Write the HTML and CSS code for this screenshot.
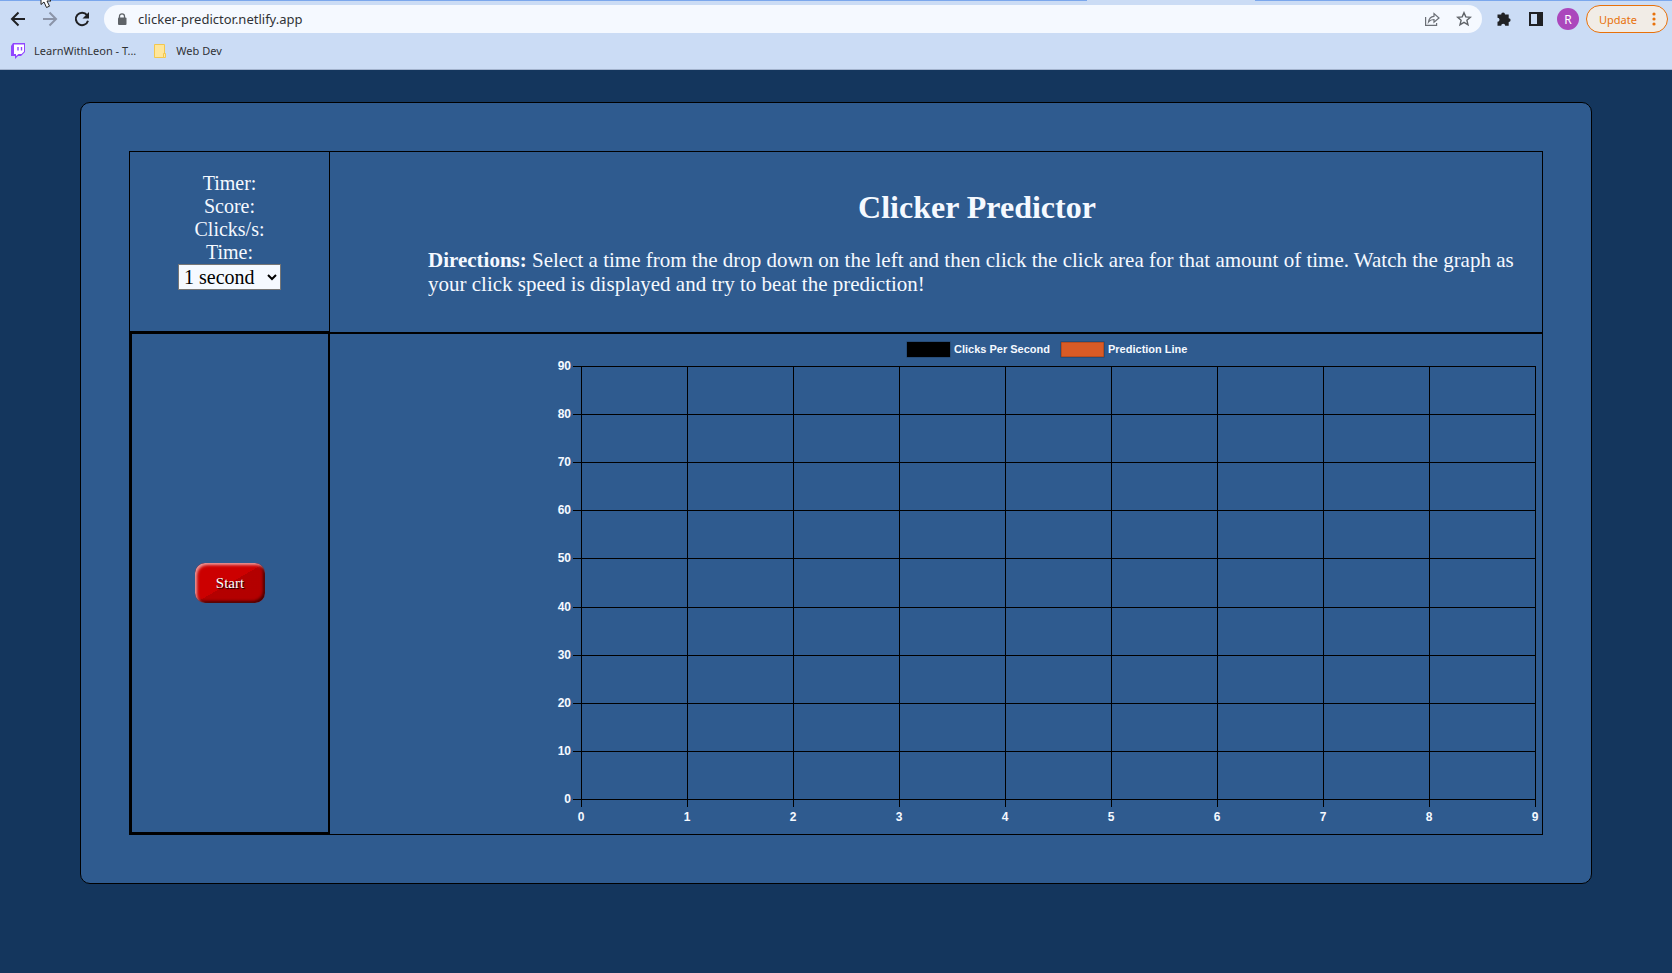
FILE: index.html
```html
<!DOCTYPE html>
<html lang="en">
<head>
<meta charset="utf-8">
<title>Clicker Predictor</title>
<link rel="stylesheet" href="styles.css">
</head>
<body>
<header class="browser">
  <div class="tab-edge"><span class="active-tab"></span></div>
  <div class="toolbar">
    <button class="icon-btn" aria-label="Back"><svg width="16" height="16" viewBox="0 0 16 16" fill="none" stroke="#202124" stroke-width="2"><path d="M15 8H2M8.500 1.500L2 8l6.500 6.500"/></svg></button>
    <button class="icon-btn" aria-label="Forward"><svg width="16" height="16" viewBox="0 0 16 16" fill="none" stroke="#8b94a8" stroke-width="2"><path d="M1 8h13M7.500 1.500L14 8l-6.500 6.500"/></svg></button>
    <button class="icon-btn" aria-label="Reload"><svg width="16" height="16" viewBox="0 0 16 16"><path d="M13 4.200A6.200 6.200 0 1 0 14 9.700" fill="none" stroke="#202124" stroke-width="2"/><path d="M15 1v6.500H8.500z" fill="#202124"/></svg></button>
    <div class="address">
      <svg width="10" height="13" viewBox="0 0 10 13"><path d="M2.500 5V3.300a2.500 2.500 0 0 1 5 0V5" fill="none" stroke="#5f6368" stroke-width="1.300"/><rect x="1" y="4.500" width="8.500" height="7.500" rx="1" fill="#5f6368"/></svg>
      <input class="url" type="text" aria-label="Address" value="clicker-predictor.netlify.app">
      <button class="icon-btn" aria-label="Share"><svg width="16" height="16" viewBox="0 0 16 16" fill="none" stroke="#6b6f76" stroke-width="1.200"><path d="M1.600 6v8.400h11V12"/><path d="M4.500 11C5 7 7 5.500 10 5.300V2.500L15 7l-5 4.300V8.500C7.500 8.500 6 9 4.500 11z"/></svg></button>
      <button class="icon-btn" aria-label="Bookmark"><svg width="16" height="16" viewBox="0 0 16 16" fill="none" stroke="#5f6368" stroke-width="1.400"><path d="M8 1.700l1.800 4.200 4.600.4-3.500 3 1.100 4.500L8 11.400l-4 2.400 1.100-4.500-3.500-3 4.600-.4z"/></svg></button>
    </div>
    <button class="icon-btn" aria-label="Extensions"><svg width="16" height="16" viewBox="0 0 16 16" fill="#202124"><path d="M1.500 3.500h3.700a1.900 1.900 0 0 1 3.800 0h3.700v3.700a1.900 1.900 0 0 1 0 3.800v3.700H9.200a2 2 0 0 0-4 0H1.500v-3.900a2 2 0 0 0 0-4z"/></svg></button>
    <button class="icon-btn" aria-label="Side panel"><svg width="16" height="16" viewBox="0 0 16 16"><path d="M1 1h14v14H1z" fill="#202124"/><path d="M3 3h6v10H3z" fill="#cbdcf5"/></svg></button>
    <button class="avatar" aria-label="Profile">R</button>
    <button class="update">Update <svg width="4" height="14" viewBox="0 0 4 14" fill="#e8710a"><circle cx="2" cy="2" r="1.600"/><circle cx="2" cy="7" r="1.600"/><circle cx="2" cy="12" r="1.600"/></svg></button>
  </div>
  <nav class="bookmarks">
    <a href="#"><svg width="16" height="16" viewBox="0 0 16 16"><path d="M3 0h12v9l-4 4H8l-3 3v-3H1V3z" fill="#9146ff"/><path d="M4 1.500h10v7L11.500 11H8.500L6 13v-2H4z" fill="#fff"/><path d="M8 4v3.500M11.500 4v3.500" stroke="#9146ff" stroke-width="1.400"/></svg>LearnWithLeon - T...</a>
    <a href="#"><svg width="16" height="16" viewBox="0 0 16 16"><path d="M2.500 1.500h10v13h-10z" fill="#ffe69a" stroke="#f3c74d"/><path d="M11.500 10.500h2v4h-2z" fill="#ffe69a" stroke="#f3c74d"/></svg>Web Dev</a>
  </nav>
  <svg class="cursor" width="14" height="8" viewBox="0 0 14 8"><path d="M1 -8V4.500L4 2l2.500 5.500 3-1.300L7 1h4z" fill="#fff" stroke="#222"/></svg>
</header>
<main class="card">
  <div class="board">
    <section class="side">
      <div class="stats">
        <div>Timer:</div>
        <div>Score:</div>
        <div>Clicks/s:</div>
        <label for="time">Time:</label>
        <select id="time"><option>1 second</option><option>5 seconds</option></select>
      </div>
      <div class="click-area"><button class="start">Start</button></div>
    </section>
    <section class="content">
      <div class="intro">
        <h1>Clicker Predictor</h1>
        <p><strong>Directions:</strong> Select a time from the drop down on the left and then click the click area for that amount of time. Watch the graph as your click speed is displayed and try to beat the prediction!</p>
      </div>
      <div class="graph">
        <svg class="chart" viewBox="0 0 992 500" role="img" aria-label="Clicks per second chart">
          <rect class="swatch" x="357" y="8" width="43" height="15" fill="#000"/>
          <text class="legend" x="404" y="19">Clicks Per Second</text>
          <rect class="swatch" x="511" y="8" width="43" height="15" fill="#d95b26"/>
          <text class="legend" x="558" y="19">Prediction Line</text>
          <g id="grid"></g>
        </svg>
      </div>
    </section>
  </div>
</main>
<script src="chart.js"></script>
</body>
</html>
```
FILE: styles.css
```css
* { box-sizing: border-box; }
body {
  margin: 0;
  min-height: 100vh;
  background: #14365d;
  color: #f5f9ff;
  font-family: "Liberation Serif", "Times New Roman", serif;
  font-size: 20px;
}
button { border: 0; padding: 0; background: none; font: inherit; cursor: pointer; }
svg { display: block; flex: none; }

.browser {
  position: relative;
  height: 70px;
  background: #cbdcf5;
  border-bottom: 1px solid #a3b3cd;
  font-family: "Noto Sans", "Open Sans", sans-serif;
  font-size: 11px;
  color: #303236;
}
.tab-edge { height: 1px; background: #7ba7ec; }
.active-tab { display: block; width: 168px; height: 1px; margin-left: 65%; background: #cbdcf5; }
.toolbar { display: flex; align-items: center; height: 36px; padding: 0 4px 0 10px; gap: 16px; }
.address {
  flex: 1;
  display: flex;
  align-items: center;
  gap: 16px;
  height: 28px;
  margin: 0 -2px;
  padding: 0 10px 0 13px;
  border-radius: 14px;
  background: #f5f9ff;
}
.url { flex: 1; min-width: 0; margin-left: -5px; padding: 0; border: 0; background: none; color: #303236; font: inherit; font-size: 13px; }
.avatar { width: 22px; height: 22px; margin-left: -3px; border-radius: 50%; background: #ab47bc; color: #fff; font-size: 12px; }
.update {
  display: flex;
  align-items: center;
  justify-content: space-between;
  width: 82px;
  height: 28px;
  margin-left: -9px;
  padding: 0 11px 0 12px;
  border: 1px solid #e8710a;
  border-radius: 14px;
  background: #f1ece6;
  color: #e8710a;
}
.bookmarks { display: flex; gap: 16px; padding: 5px 10px; line-height: 17px; }
.bookmarks a { display: flex; align-items: center; gap: 8px; color: inherit; text-decoration: none; }
.cursor { position: absolute; left: 40px; top: 0; }

.card {
  margin: 32px 80px;
  padding: 48px;
  border: 1px solid #000;
  border-radius: 10px;
  background: #2f5b8f;
}
.board { display: grid; grid-template-columns: 201px 1fr; }
.side, .content { display: flex; flex-direction: column; }
.stats {
  display: flex;
  flex-direction: column;
  align-items: center;
  height: 180px;
  padding-top: 20px;
  border: solid #000;
  border-width: 1px 1px 0;
  line-height: 23px;
}
.stats select {
  height: 26px;
  padding: 0 1px;
  border: 1px solid #767676;
  border-radius: 0;
  background: #f5f9ff;
  color: #000;
  font: inherit;
}
.click-area {
  flex: 1;
  display: flex;
  align-items: center;
  justify-content: center;
  border: solid #000;
  border-width: 3px 2px 3px 3px;
}
.start {
  width: 70px;
  height: 40px;
  border-radius: 10px;
  background: linear-gradient(to top left, rgba(0, 0, 0, .12) 50%, transparent 50%) #cc0000;
  box-shadow: inset 2px 2px 3px rgba(255, 255, 255, .6), inset -2px -2px 3px rgba(0, 0, 0, .6);
  color: #fff;
  font-size: 15px;
  text-shadow: 1px 1px 1px #000;
}
.intro {
  height: 181px;
  padding: 37px 16px 0 98px;
  border: solid #000;
  border-width: 1px 1px 0 0;
}
h1 { margin: 0; font-size: 32px; line-height: 37px; text-align: center; }
p { margin: 22px 0 0; font-size: 21px; line-height: 24px; }
.graph { border: solid #000; border-width: 2px 1px 1px 0; }
.chart { width: 100%; max-width: 992px; margin-left: auto; }
.chart text { fill: #f5f9ff; font: bold 12px "Liberation Sans", Arial, sans-serif; }
.chart .legend { font-size: 11px; }
.chart .end { text-anchor: end; }
.chart .mid { text-anchor: middle; }
.chart .swatch { stroke: rgba(0, 0, 0, .3); }
.chart path { stroke: #000; shape-rendering: crispEdges; }
```
FILE: chart.js
```js
const left = 31, top0 = 32, width = 954, height = 433;
const parts = [];
for (let i = 0; i <= 9; i++) {
  const x = left + Math.round(i * width / 9);
  const y = top0 + Math.round(height - i * height / 9);
  parts.push(`<path d="M${x + 0.5} ${top0}V${top0 + height + 8}"/>`);
  parts.push(`<path d="M${left - 8} ${y + 0.5}H${left + width + 1}"/>`);
  parts.push(`<text class="mid" x="${x}" y="${top0 + height + 22}">${i}</text>`);
  parts.push(`<text class="end" x="${left - 10}" y="${y + 4}">${i * 10}</text>`);
}
document.getElementById("grid").innerHTML = parts.join("");
```
